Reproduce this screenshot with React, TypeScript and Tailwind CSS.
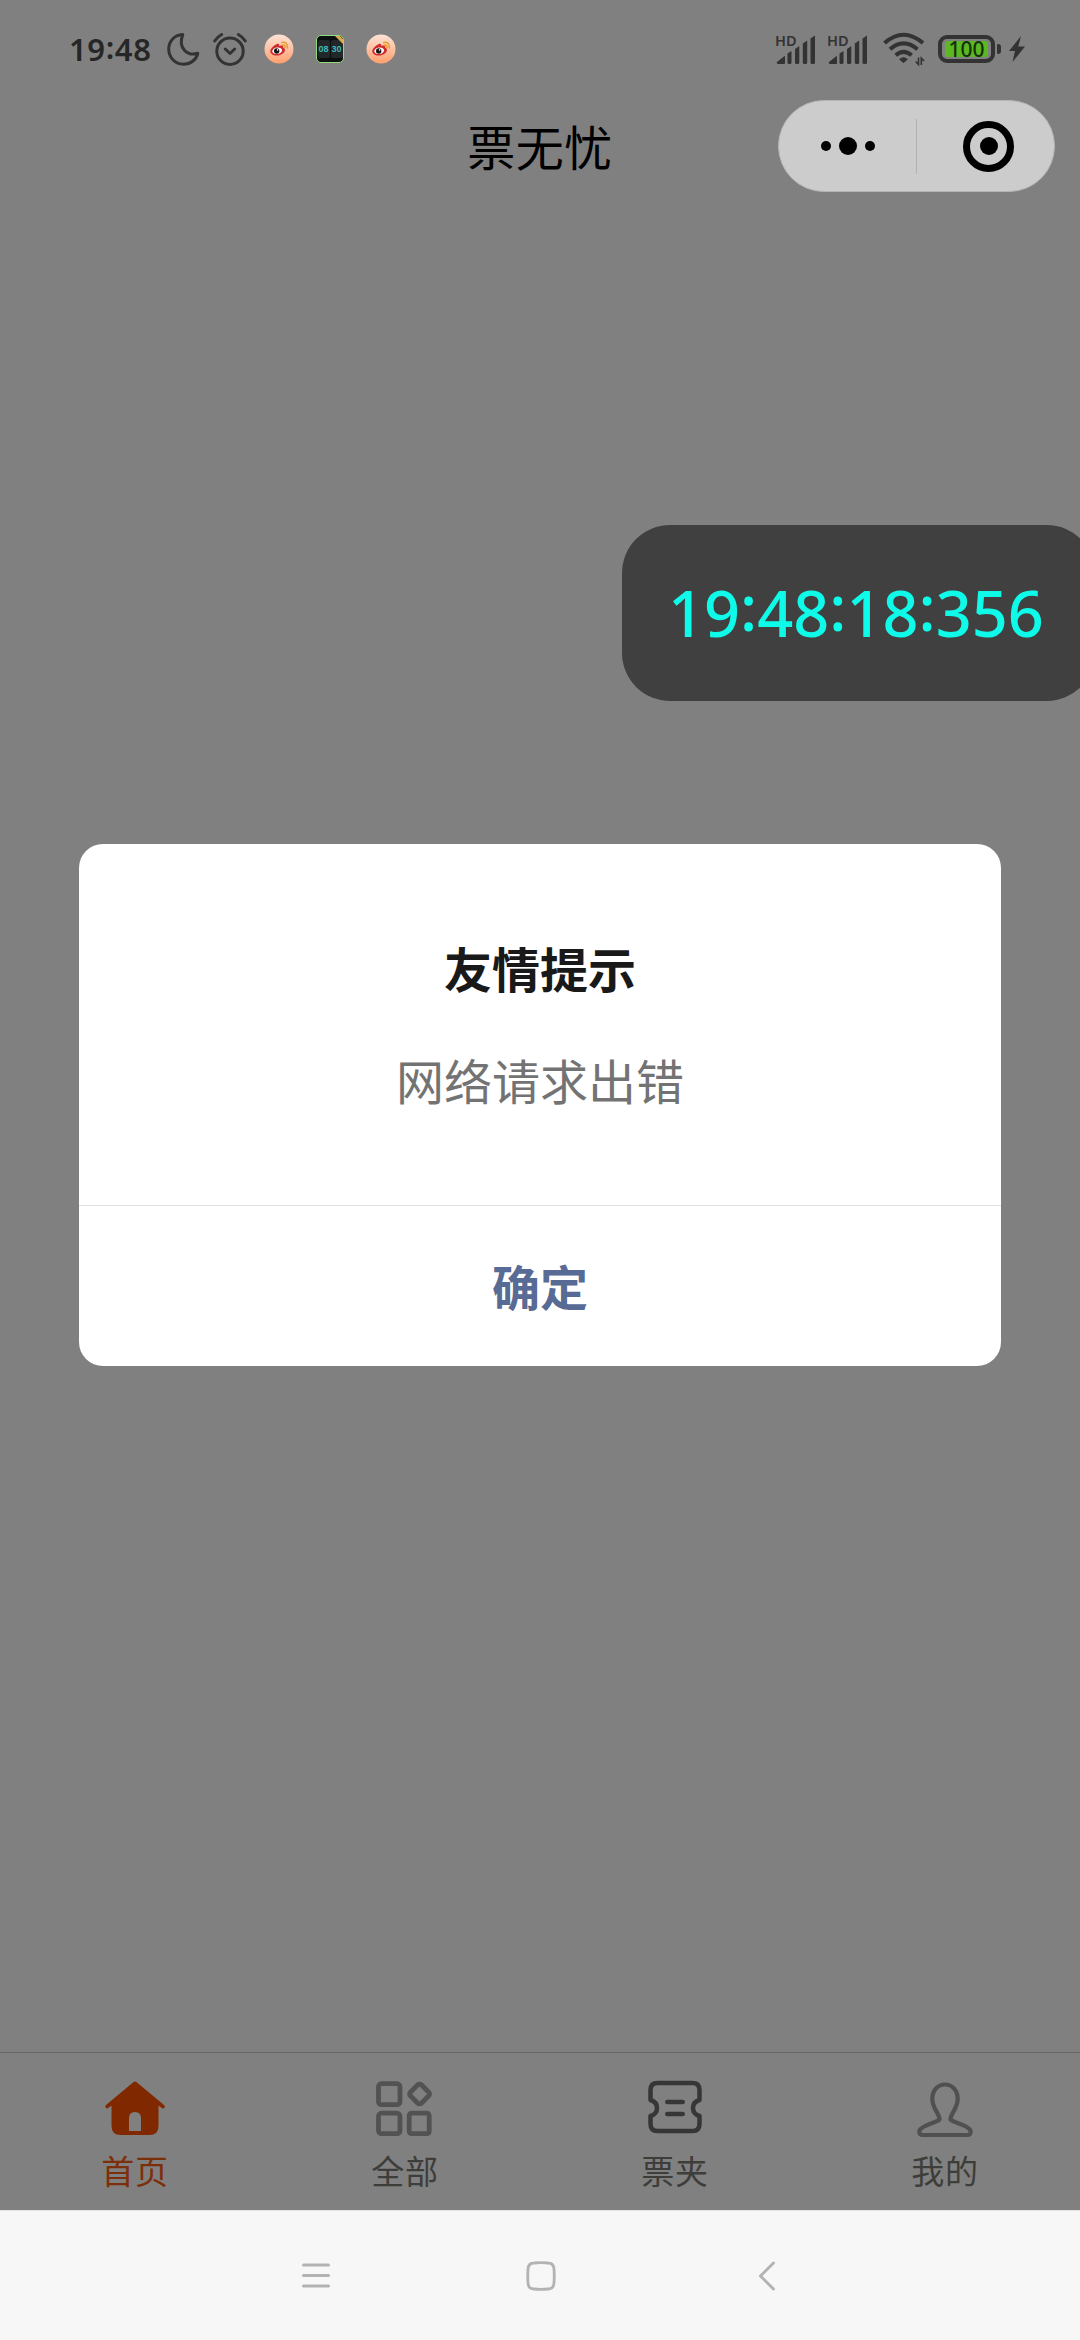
import React from "react";

function Moon() {
  return (
    <svg className="ml-[14px] shrink-0" width="36" height="36" viewBox="0 0 36 36" fill="none" stroke="#333" strokeWidth="3" strokeLinejoin="round">
      <path d="M17.8 3.6C8.500 4.300 3.700 11 3.700 18C3.700 26.500 10 33.200 18.400 33.200C25.500 33.200 31.200 29 32.800 22.300C22.500 25.500 12.500 17 17.800 3.600Z" />
    </svg>
  );
}

function Alarm() {
  return (
    <svg className="ml-[11px] shrink-0" width="36" height="36" viewBox="0 0 36 36" fill="none" stroke="#333" strokeWidth="3" strokeLinecap="round">
      <circle cx="18" cy="20.200" r="13.200" />
      <path d="M13.300 18L18 22.500L22.700 18" strokeLinejoin="round" />
      <path d="M2.700 10Q5 6 9.700 3.500M33.300 10Q31 6 26.300 3.500" />
    </svg>
  );
}

function Weibo({ id }: { id: string }) {
  return (
    <svg className="shrink-0" width="30" height="30" viewBox="0 0 30 30" fill="none">
      <defs>
        <linearGradient id={id} x1="0" y1="0" x2="0" y2="1">
          <stop offset="0" stopColor="#fce3d6" />
          <stop offset="1" stopColor="#ff9f6e" />
        </linearGradient>
      </defs>
      <circle cx="15" cy="15" r="14.500" fill={`url(#${id})`} />
      <path d="M12.500 10.200C14.500 9.300 15.600 10.300 15.200 11.900C18 10.800 19.700 11.600 19.100 13.500C21.300 14.200 21.600 16.400 20 18.400C17.700 21.200 12.500 22.300 9.200 20.900C6 19.500 5.500 17 7.300 14.600C8.700 12.700 10.500 11.100 12.500 10.200Z" fill="#cf2d2d" />
      <ellipse cx="13.200" cy="16.800" rx="4.900" ry="3.300" fill="#fff" transform="rotate(-8 13 16.800)" />
      <circle cx="12.700" cy="17" r="2.700" fill="#151515" />
      <circle cx="13.600" cy="15.900" r=".8" fill="#fff" />
      <path d="M17.800 8.400Q23.800 7.700 23.400 14M18.200 11Q21.300 10.700 21 13.500" stroke="#e89b2c" strokeWidth="1.500" strokeLinecap="round" />
    </svg>
  );
}

function FlipClock() {
  return (
    <div className="relative ml-[22px] flex h-[28px] w-[28px] shrink-0 items-center justify-center gap-px overflow-hidden rounded-[5px] border border-[#8fdc78] bg-[#0c0f10]">
      {["08", "30"].map((n) => (
        <span key={n} className="flex h-[18px] w-[12px] items-center justify-center rounded-[2px] bg-[#222829] font-['Liberation_Sans'] text-[9px] font-bold leading-none text-[#3fb9b6]">{n}</span>
      ))}
      <svg className="absolute top-0 right-0" width="8" height="8" viewBox="0 0 8 8"><path d="M0 0H5L8 3V8Z" fill="#dda953" /></svg>
    </div>
  );
}

function Signal() {
  return (
    <div className="relative h-[32px] w-[40px] shrink-0">
      <svg width="40" height="32" viewBox="0 0 40 32" fill="#333">
        <path d="M1 29.500L8.500 23.500V30.500H1.500Z" stroke="#333" strokeWidth="1" strokeLinejoin="round" />
        <path d="M11.500 20.500L15.500 18V29.500Q15.500 31 14 31H13Q11.500 31 11.500 29.500Z" />
        <path d="M19 16L23.300 13V29.500Q23.300 31 21.800 31H20.500Q19 31 19 29.500Z" />
        <path d="M26.800 10.500L31.200 7.500V29.500Q31.200 31 29.700 31H28.300Q26.800 31 26.800 29.500Z" />
        <path d="M34.500 5.500L39 2.500V29.500Q39 31 37.500 31H36Q34.500 31 34.500 29.500Z" />
      </svg>
      <span className="absolute -top-[3px] -left-[1px] text-[14.500px] leading-[20px] font-semibold text-[#333]">HD</span>
    </div>
  );
}

function Wifi() {
  return (
    <svg className="ml-[15px] shrink-0" width="42" height="36" viewBox="0 0 42 36" fill="none" stroke="#333" strokeWidth="4">
      <path d="M1.500 12Q20.500 -4.500 40 12M7 18.300Q20.500 6.500 34.500 18.300M12.700 24.300Q20.500 17.500 28.600 24.300" />
      <path d="M17 28.200Q20.500 25.300 24 28.200L20.500 31.400Z" fill="#333" stroke="#333" strokeWidth="1.200" strokeLinejoin="round" />
      <path d="M35.500 26.500V33.500L32.700 30.500M38.300 34V27L41 30" strokeWidth="1.600" />
    </svg>
  );
}

function StatusBar() {
  return (
    <header className="flex h-[98px] items-center pl-[69px] font-['Noto_Sans']">
      <span className="w-[82px] text-[31px] leading-none font-semibold tracking-[0.6px] whitespace-nowrap text-[#262626]">
        19<span className="relative -top-[2px]">:</span>48
      </span>
      <Moon />
      <Alarm />
      <div className="ml-[16px] flex"><Weibo id="weiboA" /></div>
      <FlipClock />
      <div className="ml-[22px] flex"><Weibo id="weiboB" /></div>
      <div className="ml-auto flex items-center pr-[54px]">
        <Signal />
        <div className="ml-[12px] flex"><Signal /></div>
        <Wifi />
        <div className="ml-[13px] flex h-[28px] w-[57px] items-center justify-center rounded-[9px] border-[4px] border-[#333] p-[3px]">
          <span className="flex h-[16px] w-[43px] items-center justify-center rounded-[3px] bg-[#5cb822] text-[21px] leading-none font-medium text-[#16300a]">100</span>
        </div>
        <span className="ml-[2px] h-[10px] w-[4px] rounded-r-[3px] rounded-l-[1px] bg-[#333]" />
        <svg className="ml-[7px]" width="18" height="28" viewBox="0 0 18 28"><path d="M13 1L1 16H7L4.500 27L17 11.500H10.300Z" fill="#333" /></svg>
      </div>
    </header>
  );
}

function TitleBar() {
  return (
    <div className="relative flex h-[96px] items-center justify-center">
      <h1 className="-mt-[2px] text-[48px] leading-none tracking-[0.5px] text-black">票无忧</h1>
      <div className="absolute top-[2px] right-[25px] flex h-[92px] w-[277px] items-center rounded-full border border-[#b5b5b5] bg-[#cccccc]">
        <div className="flex w-[137px] items-center justify-center gap-[8px]">
          <span className="h-[10px] w-[10px] rounded-full bg-black" />
          <span className="h-[18px] w-[18px] rounded-full bg-black" />
          <span className="h-[10px] w-[10px] rounded-full bg-black" />
        </div>
        <span className="h-[55px] w-px bg-[#b0b0b0]" />
        <div className="ml-[46px] flex h-[51px] w-[51px] items-center justify-center rounded-full border-[7px] border-black">
          <span className="h-[18px] w-[18px] rounded-full bg-black" />
        </div>
      </div>
    </div>
  );
}

function FloatingClock() {
  return (
    <div className="absolute top-[525px] left-[622px] flex h-[176px] w-[473px] items-center rounded-[48px] bg-[#404040] pl-[46px]">
      <span className="-mt-[1px] font-['Noto_Sans'] text-[63px] leading-none font-medium whitespace-nowrap text-[#0ffbe9]">
        19<span className="relative -top-[6px]">:</span>48<span className="relative -top-[6px]">:</span>18<span className="relative -top-[6px]">:</span>356
      </span>
    </div>
  );
}

function Dialog() {
  return (
    <section className="absolute top-[844px] left-[79px] flex h-[522px] w-[922px] flex-col items-center overflow-hidden rounded-[24px] bg-white">
      <div className="flex w-full flex-1 flex-col items-center border-b border-[#e0e0e0] pt-[91px]">
        <h2 className="text-[48px] leading-[64px] font-bold text-[#191919]">友情提示</h2>
        <p className="mt-[48px] text-[48px] leading-[64px] text-[#737373]">网络请求出错</p>
      </div>
      <button className="flex h-[160px] w-full items-center justify-center pb-[3px] text-[48px] leading-none font-bold text-[#576b95]">确定</button>
    </section>
  );
}

const icons = {
  home: (
    <svg width="60" height="60" viewBox="0 0 60 60">
      <path fill="#802800" fillRule="evenodd" d="M28 3.500Q30 1.700 32 3.500L59 26Q60.500 27.700 59 29.200Q57.800 30 56.500 28.700L53.500 26.500V47Q53.500 56 44.500 56H15.500Q6.500 56 6.500 47V26.500L3.500 28.700Q2 30 1 29Q-.5 27.500 1 26ZM24 52H36V39Q36 33 30 33Q24 33 24 39Z" />
    </svg>
  ),
  all: (
    <svg width="60" height="60" viewBox="0 0 60 60" fill="none" stroke="#525252" strokeWidth="4.800" strokeLinejoin="round">
      <rect x="3.500" y="4.700" width="21.500" height="21" rx="3" />
      <rect x="3.500" y="34.200" width="21.500" height="20.500" rx="3" />
      <rect x="34.200" y="34.200" width="20" height="20.500" rx="2.500" />
      <rect x="36.800" y="7.200" width="15.500" height="15.500" rx="2.500" transform="rotate(45 44.500 15)" />
    </svg>
  ),
  ticket: (
    <svg width="60" height="60" viewBox="0 0 60 60" fill="none" stroke="#363636" strokeWidth="4.500" strokeLinejoin="round" strokeLinecap="round">
      <path d="M12.500 4H47.500Q54.500 4 54.500 11V21Q48 23 48 29Q48 35 54.500 37V45Q54.500 52 47.500 52H12.500Q5.500 52 5.500 45V37Q12 35 12 29Q12 23 5.500 21V11Q5.500 4 12.500 4Z" />
      <path d="M22.300 23H37.700M22.300 35H37.700" />
    </svg>
  ),
  user: (
    <svg width="60" height="60" viewBox="0 0 60 60" fill="none" stroke="#505050" strokeWidth="4.200" strokeLinejoin="round" strokeLinecap="round">
      <path d="M24.500 40.500C24.500 34.500 17.300 29.500 17.300 20C17.300 11.500 22.500 5.500 30 5.500C37.500 5.500 42.700 11.500 42.700 20C42.700 29.500 35.500 34.500 35.500 40.500C39 44 53 45.500 55.500 51.500Q56.500 56 52 56H8Q3.500 56 4.500 51.500C7 45.500 21 44 24.500 40.500Z" />
    </svg>
  ),
};

const tabs = [
  { label: "首页", icon: icons.home, color: "text-[#7c2f0b]" },
  { label: "全部", icon: icons.all, color: "text-[#3d3d3a]" },
  { label: "票夹", icon: icons.ticket, color: "text-[#3d3d3a]" },
  { label: "我的", icon: icons.user, color: "text-[#3d3d3a]" },
];

function TabBar() {
  return (
    <nav className="grid h-[158px] grid-cols-4 border-t border-[#666]">
      {tabs.map((t) => (
        <div key={t.label} className="flex flex-col items-center pt-[26px]">
          {t.icon}
          <span className={`mt-[11px] text-[33px] leading-[40px] tracking-[0.8px] ${t.color}`}>{t.label}</span>
        </div>
      ))}
    </nav>
  );
}

function SystemNav() {
  return (
    <footer className="flex h-[130px] items-center justify-center border-t border-[#e4e4e4] bg-[#f7f7f7]">
      <svg width="30" height="32" viewBox="0 0 30 32" fill="none" stroke="#b3b3b3" strokeWidth="3" strokeLinecap="round"><path d="M2.500 5H27.500M2.500 15.500H27.500M2.500 26H27.500" /></svg>
      <svg className="ml-[194px]" width="32" height="32" viewBox="0 0 32 32" fill="none" stroke="#b3b3b3" strokeWidth="2.800"><path d="M9 3Q16 2.400 23 3Q28.600 3 29 9Q29.500 16 29 23Q28.600 29 23 29Q16 29.600 9 29Q3.400 29 3 23Q2.500 16 3 9Q3.400 3 9 3Z" /></svg>
      <svg className="ml-[200px] mr-[2px]" width="20" height="32" viewBox="0 0 20 32" fill="none" stroke="#b3b3b3" strokeWidth="3" strokeLinecap="round" strokeLinejoin="round"><path d="M16.500 3L3.500 16L16.500 29" /></svg>
    </footer>
  );
}

export default function App() {
  return (
    <div className="relative flex h-[2340px] w-[1080px] flex-col overflow-hidden bg-[#808080] font-['Noto_Sans_CJK_SC',sans-serif]">
      <StatusBar />
      <TitleBar />
      <main className="flex-1" />
      <TabBar />
      <SystemNav />
      <FloatingClock />
      <Dialog />
    </div>
  );
}
